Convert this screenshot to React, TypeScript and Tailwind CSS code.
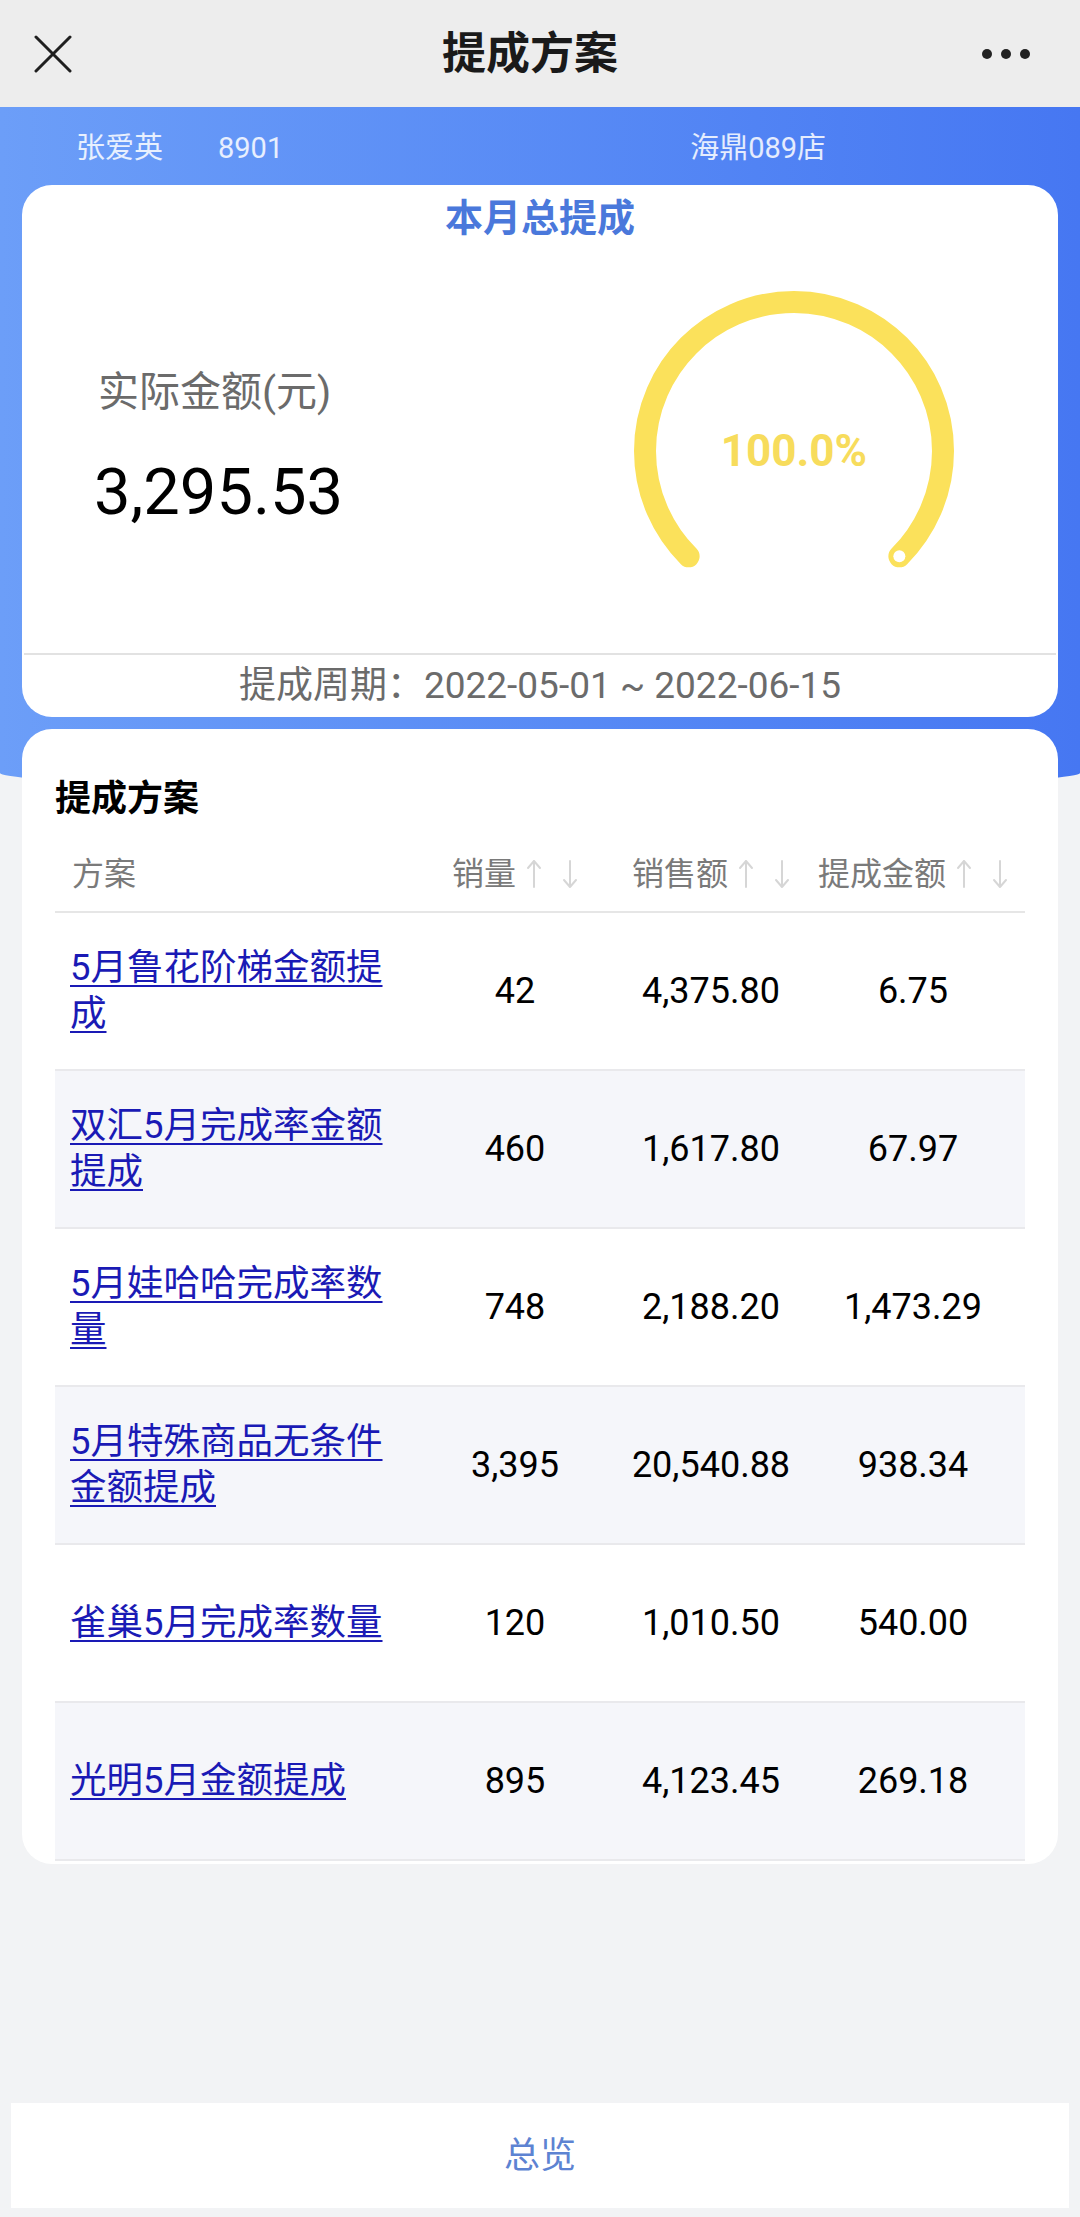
import React from 'react';

interface PlanRow {
  name: string;
  qty: string;
  sales: string;
  amount: string;
}

const rows: PlanRow[] = [
  { name: '5月鲁花阶梯金额提成', qty: '42', sales: '4,375.80', amount: '6.75' },
  { name: '双汇5月完成率金额提成', qty: '460', sales: '1,617.80', amount: '67.97' },
  { name: '5月娃哈哈完成率数量', qty: '748', sales: '2,188.20', amount: '1,473.29' },
  { name: '5月特殊商品无条件金额提成', qty: '3,395', sales: '20,540.88', amount: '938.34' },
  { name: '雀巢5月完成率数量', qty: '120', sales: '1,010.50', amount: '540.00' },
  { name: '光明5月金额提成', qty: '895', sales: '4,123.45', amount: '269.18' },
];

const SortArrows = () => (
  <svg width="52" height="30" viewBox="0 0 52 30" fill="none" stroke="#d6d6d6" strokeWidth="2" strokeLinecap="round" strokeLinejoin="round">
    {/* up */}
    <path d="M8 28V2M2 9l6-7 6 7" />
    {/* down */}
    <path d="M44 2v26M38 21l6 7 6-7" />
  </svg>
);

const SortHeader = ({ label }: { label: string }) => (
  <div className="flex items-center justify-center gap-[10px]">
    <span>{label}</span>
    <SortArrows />
  </div>
);

// Gauge: 270° arc, full progress
const Gauge = () => {
  const cx = 170;
  const cy = 209;
  const r = 149;
  const d = r * Math.SQRT1_2;
  const x1 = cx - d;
  const x2 = cx + d;
  const y = cy + d;
  return (
    <svg width="340" height="411" viewBox="0 0 340 411">
      <path
        d={`M ${x1} ${y} A ${r} ${r} 0 1 1 ${x2} ${y}`}
        fill="none"
        stroke="#fbe15b"
        strokeWidth="22"
        strokeLinecap="round"
      />
      <circle cx={x2} cy={y} r="6" fill="#ffffff" />
      <text
        x={cx}
        y={cy}
        textAnchor="middle"
        dominantBaseline="central"
        fill="#f7dc5c"
        fontSize="44"
        fontWeight="700"
        fontFamily="Roboto, 'Noto Sans CJK SC', sans-serif"
      >
        100.0%
      </text>
    </svg>
  );
};

export default function App() {
  return (
    <div className="flex min-h-[2217px] w-[1080px] flex-col bg-[#f2f3f5] font-['Roboto','Noto_Sans_CJK_SC',sans-serif] text-black">
      {/* Top nav */}
      <div className="grid h-[107px] grid-cols-[1fr_auto_1fr] items-center bg-[#ededed] pl-[34px] pr-[50px]">
        <svg width="38" height="38" viewBox="0 0 38 38" stroke="#1f1f1f" strokeWidth="3" strokeLinecap="round">
          <path d="M2 2l34 34M36 2L2 36" />
        </svg>
        <h1 className="pr-[4px] text-[44px] font-semibold leading-none text-[#1a1a1a]">提成方案</h1>
        <div className="flex items-center justify-end gap-[9px]">
          <span className="h-[10px] w-[10px] rounded-full bg-[#222]" />
          <span className="h-[10px] w-[10px] rounded-full bg-[#222]" />
          <span className="h-[10px] w-[10px] rounded-full bg-[#222]" />
        </div>
      </div>

      {/* Blue banner */}
      <div className="rounded-bl-[50%_16px] rounded-br-[50%_16px] bg-gradient-to-r from-[#6c9ef8] to-[#4677f2] pb-[72px]">
        <div className="flex h-[78px] items-center pt-[6px] text-[29px] text-white/85">
          <span className="ml-[76px]">张爱英</span>
          <span className="ml-[55px]">8901</span>
          <span className="ml-[407px]">海鼎089店</span>
        </div>

        {/* Summary card */}
        <div className="mx-[22px] rounded-[30px] bg-white">
          <div className="pt-[9px] text-center text-[38px] font-bold leading-[48px] text-[#4a78db]">本月总提成</div>
          <div className="flex h-[411px] items-center justify-between pl-[76px] pr-[94px]">
            <div className="flex flex-col gap-[40px]">
              <span className="text-[41px] leading-[48px] text-[#6b6b6b]">实际金额(元)</span>
              <span className="-ml-[4px] text-[65px] leading-[72px] text-black">3,295.53</span>
            </div>
            <Gauge />
          </div>
          <div className="mx-[2px] border-t-2 border-[#e2e2e2]" />
          <div className="flex h-[62px] items-center justify-center text-[37px] text-[#6b6b6b]">
            提成周期：2022-05-01 ~ 2022-06-15
          </div>
        </div>
      </div>

      {/* Plans card */}
      <div className="relative mx-[22px] mt-[-60px] rounded-[30px] bg-white px-[33px] pb-[3px]">
        <div className="pt-[47px] text-[36px] font-bold leading-[46px]">提成方案</div>
        <div className="mt-[15px] grid h-[76px] grid-cols-[358px_204px_188px_216px] items-center border-b-2 border-[#e6e6e6] text-[32px] text-[#7a7a7a]">
          <span className="pl-[17px]">方案</span>
          <SortHeader label="销量" />
          <SortHeader label="销售额" />
          <SortHeader label="提成金额" />
        </div>
        {rows.map((row, i) => (
          <div
            key={row.name}
            className={`grid h-[158px] grid-cols-[358px_204px_188px_216px] items-center border-b-2 border-[#e9e9ec] text-[36px] ${
              i % 2 === 1 ? 'bg-[#f5f6fa]' : 'bg-white'
            }`}
          >
            <div className="pl-[15px]">
              <a className="block w-[330px] text-[36.5px] leading-[46px] text-[#1a1ab5] underline decoration-[2px] underline-offset-[5px]">
                {row.name}
              </a>
            </div>
            <span className="text-center">{row.qty}</span>
            <span className="text-center">{row.sales}</span>
            <span className="text-center">{row.amount}</span>
          </div>
        ))}
      </div>

      <div className="flex-1" />

      {/* Bottom bar */}
      <div className="mx-[11px] mb-[9px] flex h-[105px] items-center justify-center bg-white text-[36px] text-[#5d83d2]">
        总览
      </div>
    </div>
  );
}
